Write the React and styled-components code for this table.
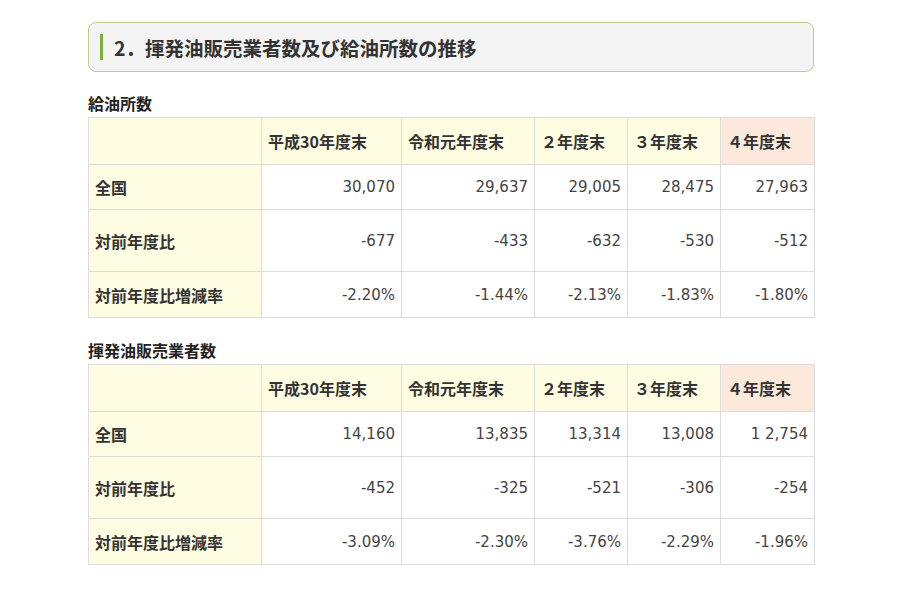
import React from "react"
import styled, { createGlobalStyle } from "styled-components"

const GlobalStyle = createGlobalStyle`
  body {
    margin: 0;
    background: #fff;
    font-family: "DejaVu Sans", "Noto Sans CJK JP", sans-serif;
    color: #333;
  }
`

const Page = styled.div`
  width: 726px;
  padding: 22px 0 0 88px;
`

const Heading = styled.div`
  display: flex;
  align-items: center;
  height: 48px;
  border: 1px solid #b8d08a;
  border-radius: 8px;
  background: #f4f4f4;
  padding-left: 11px;
`

const Bar = styled.span`
  width: 3px;
  height: 26px;
  background: #7fb03e;
  margin-right: 11px;
`

const HeadingText = styled.h2`
  margin: 0;
  font-size: 19.5px;
  font-weight: bold;
  color: #333;
  font-family: "Noto Sans CJK JP", sans-serif;
`

const Caption = styled.div`
  margin-top: ${p => p.top}px;
  height: 20px;
  line-height: 20px;
  font-size: 16px;
  font-weight: bold;
  font-family: "Noto Sans CJK JP", sans-serif;
  color: #222;
`

const Table = styled.table`
  margin-top: 4px;
  width: 726px;
  border-collapse: collapse;
  table-layout: fixed;
`

const Row = styled.tr`
  height: ${p => p.h}px;
`

const Head = styled.th`
  text-align: left;
  font-size: 16px;
  font-weight: bold;
  padding: 0 6px;
  border: 1px solid #dcdcdc;
  background: ${p => (p.peach ? "#fde9db" : "#fefde1")};
  font-family: "Noto Sans CJK JP", sans-serif;
  color: #333;
`

const Label = styled.th`
  text-align: left;
  font-size: 16px;
  font-weight: bold;
  padding: 0 6px;
  border: 1px solid #dcdcdc;
  background: #fefde1;
  font-family: "Noto Sans CJK JP", sans-serif;
  color: #333;
`

const Cell = styled.td`
  text-align: right;
  font-size: 15px;
  font-family: "DejaVu Sans", sans-serif;
  padding: 0 6px;
  border: 1px solid #dcdcdc;
  color: #444;
`

const widths = [173, 140, 133, 93, 93, 94]
const years = ["平成30年度末", "令和元年度末", "２年度末", "３年度末", "４年度末"]
const heights = [45, 62, 46]

const DataTable = ({ rows }) => (
  <Table>
    <colgroup>
      {widths.map((w, i) => (
        <col key={i} style={{ width: w }} />
      ))}
    </colgroup>
    <tbody>
      <Row h={47}>
        <Head />
        {years.map((y, i) => (
          <Head key={y} peach={i === 4}>
            {y}
          </Head>
        ))}
      </Row>
      {rows.map((r, i) => (
        <Row key={r.label} h={heights[i]}>
          <Label>{r.label}</Label>
          {r.values.map((v, j) => (
            <Cell key={j}>{v}</Cell>
          ))}
        </Row>
      ))}
    </tbody>
  </Table>
)

const stations = [
  { label: "全国", values: ["30,070", "29,637", "29,005", "28,475", "27,963"] },
  { label: "対前年度比", values: ["-677", "-433", "-632", "-530", "-512"] },
  { label: "対前年度比増減率", values: ["-2.20%", "-1.44%", "-2.13%", "-1.83%", "-1.80%"] },
]

const dealers = [
  { label: "全国", values: ["14,160", "13,835", "13,314", "13,008", "1 2,754"] },
  { label: "対前年度比", values: ["-452", "-325", "-521", "-306", "-254"] },
  { label: "対前年度比増減率", values: ["-3.09%", "-2.30%", "-3.76%", "-2.29%", "-1.96%"] },
]

const App = () => {
  return (
    <Page>
      <GlobalStyle />
      <Heading>
        <Bar />
        <HeadingText>2．揮発油販売業者数及び給油所数の推移</HeadingText>
      </Heading>
      <Caption top={21}>給油所数</Caption>
      <DataTable rows={stations} />
      <Caption top={22}>揮発油販売業者数</Caption>
      <DataTable rows={dealers} />
    </Page>
  )
}

export default App
